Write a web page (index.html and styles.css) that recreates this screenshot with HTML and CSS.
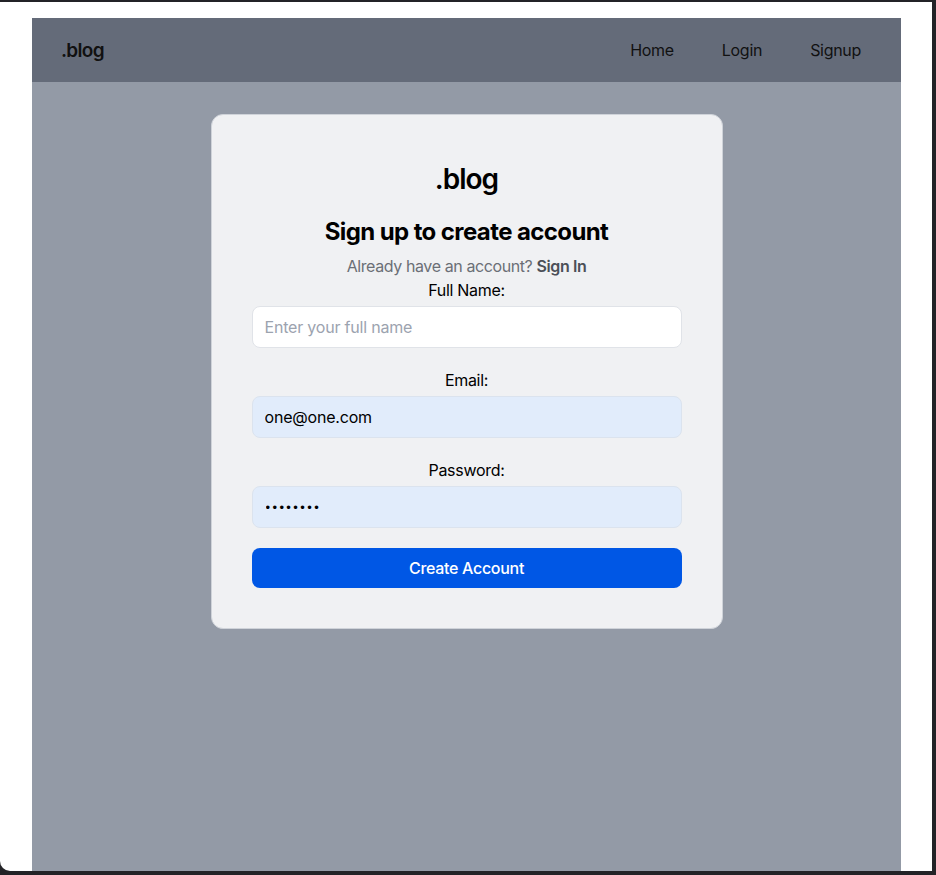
FILE: index.html
```html
<!DOCTYPE html>
<html lang="en">
<head>
<meta charset="utf-8">
<title>.blog - Sign up</title>
<link rel="stylesheet" href="styles.css">
</head>
<body>
<div class="window">
  <div class="app">
    <header class="nav">
      <a class="nav-logo" href="#">.blog</a>
      <nav class="nav-links">
        <a href="#">Home</a>
        <a href="#">Login</a>
        <a href="#">Signup</a>
      </nav>
    </header>
    <main class="main">
      <div class="card">
        <div class="card-logo">.blog</div>
        <h2 class="card-title">Sign up to create account</h2>
        <p class="card-sub">Already have an account? <a href="#">Sign In</a></p>
        <form class="form">
          <div class="field">
            <label for="name">Full Name:</label>
            <input id="name" class="input" type="text" placeholder="Enter your full name">
          </div>
          <div class="field">
            <label for="email">Email:</label>
            <input id="email" class="input input-filled" type="email" value="one@one.com">
          </div>
          <div class="field">
            <label for="password">Password:</label>
            <input id="password" class="input input-filled input-password" type="password" value="password">
          </div>
          <button type="button" class="btn">Create Account</button>
        </form>
      </div>
    </main>
  </div>
</div>
</body>
</html>
```

FILE: styles.css
```css
html {
  background: #232327;
}
body {
  margin: 0;
  font-family: Inter, "Liberation Sans", sans-serif;
  letter-spacing: -0.3px;
  color: #000;
}
.window {
  width: 932px;
  height: 869px;
  margin-top: 2px;
  background: #fff;
  border-bottom-left-radius: 10px;
  overflow: hidden;
  padding: 16px 31px 0 32px;
  box-sizing: border-box;
  display: flex;
}
.app {
  flex: 1;
  display: flex;
  flex-direction: column;
  background: #939aa6;
}
.nav {
  height: 64px;
  background: #646b79;
  display: flex;
  align-items: center;
  justify-content: space-between;
  padding: 0 40px 0 29px;
}
.nav a {
  text-decoration: none;
  color: #111;
}
.nav-logo {
  font-size: 19px;
  font-weight: 600;
  letter-spacing: -0.7px;
}
.nav-links {
  display: flex;
  gap: 48px;
  font-size: 16px;
}
.main {
  flex: 1;
  display: flex;
  justify-content: center;
  align-items: flex-start;
  padding-top: 32px;
}
.card {
  width: 512px;
  box-sizing: border-box;
  background: #f0f1f3;
  border: 1px solid #cfd3d9;
  border-radius: 12px;
  padding: 46px 40px 40px;
  text-align: center;
}
.card-logo {
  font-size: 28px;
  line-height: 36px;
  font-weight: 600;
  letter-spacing: -1px;
  margin-bottom: 19px;
}
.card-title {
  margin: 0;
  font-size: 24px;
  line-height: 32px;
  font-weight: 700;
  letter-spacing: -0.6px;
}
.card-sub {
  margin: 6px 0 0;
  font-size: 16px;
  line-height: 24px;
  color: #6b6f76;
  letter-spacing: -0.4px;
}
.card-sub a {
  color: #4b4f57;
  font-weight: 600;
  text-decoration: none;
}
.form {
  display: flex;
  flex-direction: column;
}
.field {
  display: flex;
  flex-direction: column;
  gap: 4px;
  margin-bottom: 20px;
}
.field label {
  font-size: 16px;
  line-height: 24px;
}
.input {
  height: 42px;
  box-sizing: border-box;
  border: 1px solid #e0e3e8;
  border-radius: 8px;
  background: #fff;
  padding: 8px 12px;
  font-family: inherit;
  font-size: 16px;
  line-height: 24px;
  letter-spacing: -0.2px;
  color: #000;
  outline: none;
}
.input::placeholder {
  color: #9ca3af;
}
.input-filled {
  background: #e1ecfb;
  border-color: #dbe3ee;
}
.input-password {
  font-family: "Liberation Sans", sans-serif;
  font-size: 13px;
  letter-spacing: 2.4px;
  padding-left: 13px;
}
.btn {
  height: 40px;
  border: 0;
  border-radius: 8px;
  background: #0057e5;
  color: #fff;
  font-family: inherit;
  font-size: 16px;
  font-weight: 500;
  letter-spacing: -0.3px;
}
```
